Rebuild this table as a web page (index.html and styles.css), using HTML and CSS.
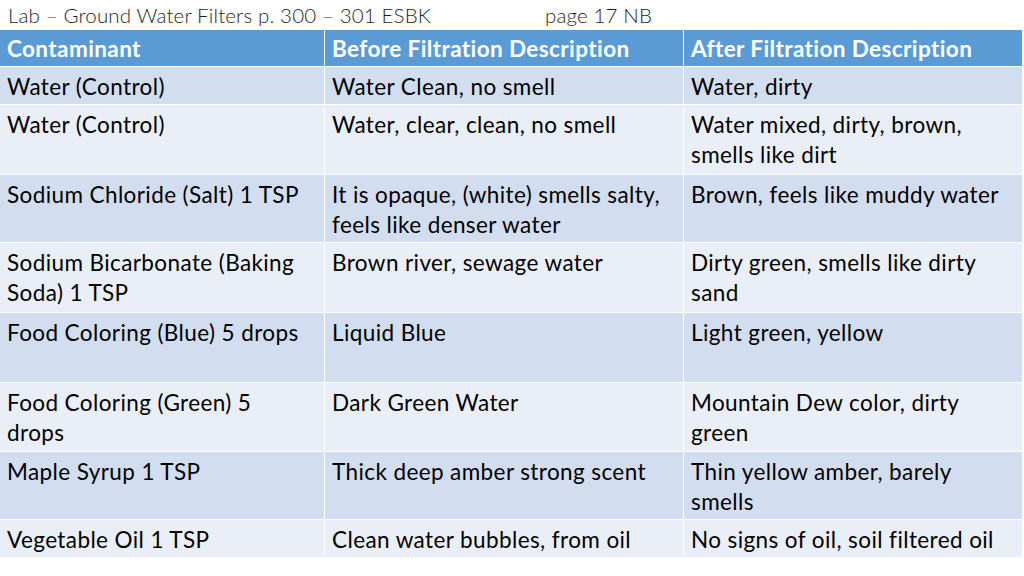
FILE: index.html
```html
<!DOCTYPE html>
<html lang="en">
<head>
<meta charset="utf-8">
<title>Lab – Ground Water Filters</title>
<link rel="stylesheet" href="styles.css">
</head>
<body>
<div class="slide">
  <div class="title"><span class="t1">Lab – Ground Water Filters p. 300 – 301 ESBK</span><span class="t2">page 17 NB</span></div>
  <div class="table">
    <div class="cell head">Contaminant</div>
    <div class="cell head">Before Filtration Description</div>
    <div class="cell head">After Filtration Description</div>

    <div class="cell dark">Water (Control)</div>
    <div class="cell dark">Water Clean, no smell</div>
    <div class="cell dark">Water, dirty</div>

    <div class="cell light">Water (Control)</div>
    <div class="cell light">Water, clear, clean, no smell</div>
    <div class="cell light">Water mixed, dirty, brown,<br>smells like dirt</div>

    <div class="cell dark">Sodium Chloride (Salt) 1 TSP</div>
    <div class="cell dark">It is opaque, (white) smells salty,<br>feels like denser water</div>
    <div class="cell dark">Brown, feels like muddy water</div>

    <div class="cell light">Sodium Bicarbonate (Baking<br>Soda) 1 TSP</div>
    <div class="cell light">Brown river, sewage water</div>
    <div class="cell light">Dirty green, smells like dirty<br>sand</div>

    <div class="cell dark">Food Coloring (Blue) 5 drops</div>
    <div class="cell dark">Liquid Blue</div>
    <div class="cell dark">Light green, yellow</div>

    <div class="cell light">Food Coloring (Green) 5<br>drops</div>
    <div class="cell light">Dark Green Water</div>
    <div class="cell light">Mountain Dew color, dirty<br>green</div>

    <div class="cell dark">Maple Syrup 1 TSP</div>
    <div class="cell dark">Thick deep amber strong scent</div>
    <div class="cell dark">Thin yellow amber, barely<br>smells</div>

    <div class="cell light">Vegetable Oil 1 TSP</div>
    <div class="cell light">Clean water bubbles, from oil</div>
    <div class="cell light">No signs of oil, soil filtered oil</div>
  </div>
</div>
</body>
</html>
```
FILE: styles.css
```css
html, body {
  margin: 0;
  padding: 0;
  background: #ffffff;
}
.slide {
  width: 1024px;
  height: 576px;
  font-family: "Lato", "Liberation Sans", sans-serif;
  color: #000000;
}
.title {
  height: 30px;
  display: flex;
  align-items: center;
  padding-left: 8px;
  font-size: 20.5px;
  font-weight: 300;
  letter-spacing: 0.15px;
  color: #1f1f1f;
  white-space: nowrap;
}
.title .t2 {
  margin-left: 114px;
}
.table {
  display: grid;
  grid-template-columns: 324px 358px 338px;
  grid-template-rows: 36px 37px 69px 67px 69px 69px 68px 67px 37px;
  column-gap: 1px;
  row-gap: 1px;
  width: 1022px;
  background: #ffffff;
}
.cell {
  box-sizing: border-box;
  padding: 5px 8px 0 7px;
  font-size: 22.5px;
  letter-spacing: 0.4px;
  line-height: 30px;
  white-space: nowrap;
}
.head {
  background: #5b9bd5;
  color: #ffffff;
  font-weight: 700;
  padding-top: 4px;
}
.dark {
  background: #d2deef;
}
.light {
  background: #eaeff7;
}
```
